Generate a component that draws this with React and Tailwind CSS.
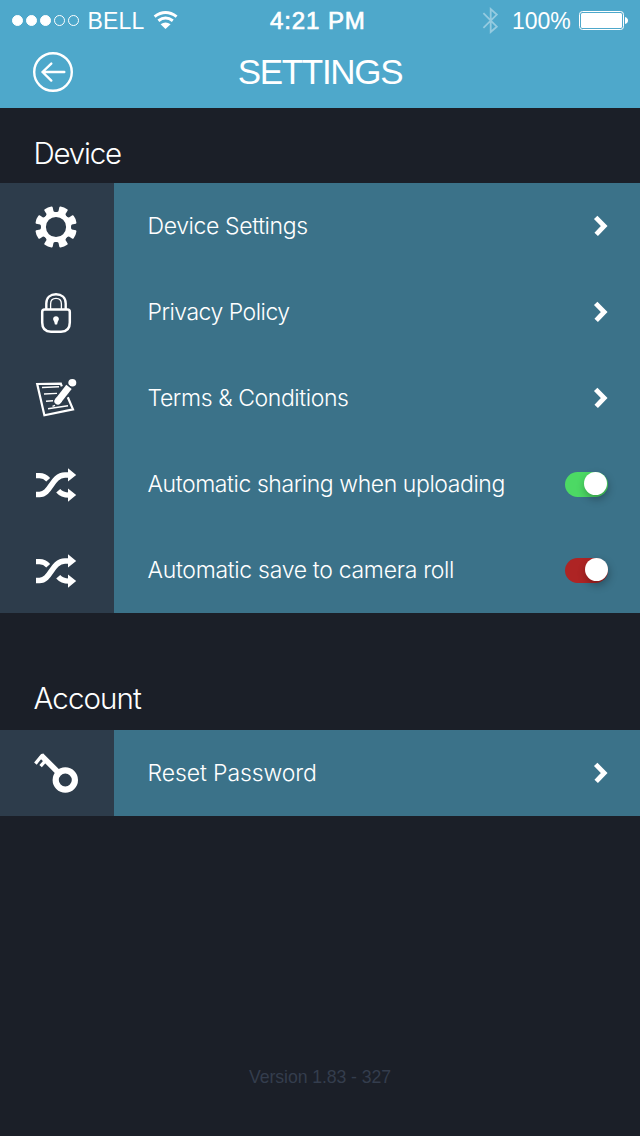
import React from "react";

const GEAR_ANGLES = [22.5, 67.5, 112.5, 157.5, 202.5, 247.5, 292.5, 337.5];

function IconFrame({ children }) {
  return (
    <svg viewBox="0 0 114 86" className="block h-[86px] w-[114px]" fill="none" stroke="white">
      {children}
    </svg>
  );
}

function GearIcon() {
  return (
    <IconFrame>
      <circle cx="56" cy="44" r="12.6" strokeWidth="5" />
      <g fill="white" stroke="none">
        {GEAR_ANGLES.map((a) => (
          <path key={a} transform={`rotate(${a} 56 44)`} d="M50 31.5 L52.2 28.4 L51.5 24.4 Q51.5 23.6 52.4 23.4 Q56 22.4 59.6 23.4 Q60.5 23.6 60.5 24.4 L59.8 28.4 L62 31.5 Z" />
        ))}
      </g>
    </IconFrame>
  );
}

function LockIcon() {
  return (
    <IconFrame>
      <path d="M42.2 43 Q42.2 40.6 44.6 40.6 H67.4 Q69.8 40.6 69.8 43 V53.5 Q69.8 62.7 61 62.7 H51 Q42.2 62.7 42.2 53.5 Z" strokeWidth="2.5" />
      <path d="M46.3 40 V34.5 C46.3 28.5 50.5 25.2 56 25.2 S65.7 28.5 65.7 34.5 V40" strokeWidth="2.4" />
      <path d="M50.6 40 V35 C50.6 31.3 53 29.3 56 29.3 S61.4 31.3 61.4 35 V40" strokeWidth="1.3" />
      <path d="M56 47.2 C54.3 47.2 53.1 48.5 53.1 50.1 C53.1 51.3 54 52.2 54.3 53 L54.9 55.6 H57.1 L57.7 53 C58 52.2 58.9 51.3 58.9 50.1 C58.9 48.5 57.7 47.2 56 47.2 Z" fill="white" stroke="none" />
    </IconFrame>
  );
}

function NotesIcon() {
  return (
    <IconFrame>
      <path d="M61.8 31.4 L60.8 28.7 L37.2 29 L44.4 60.3 L73 54.4 L67.8 42.2" strokeWidth="2.2" />
      <path d="M42 32.5 L59 31.8 M44 39 L57 38.4 M46 46.2 L53 45.7 M48 53.8 L68 50.8 M52.5 51.4 L55 50.4" strokeWidth="1.4" />
      <path d="M58 46 L69 31.8" strokeWidth="6.8" />
      <path d="M57.8 46.2 L58.4 45.5" strokeWidth="6.8" strokeLinecap="round" />
      <ellipse cx="72.3" cy="27.8" rx="4" ry="3.8" fill="white" stroke="none" />
      <path d="M67.6 29.2 L71.4 32.2" stroke="#2d3c4b" strokeWidth="0.8" />
    </IconFrame>
  );
}

function ShuffleIcon() {
  return (
    <IconFrame>
      <path d="M36 53.4 H39.5 C51 53.4 51.5 34.3 65 34.1 H69" strokeWidth="5.5" />
      <path d="M36 34.7 H39.5 Q44.5 34.7 48.2 38.7" strokeWidth="5.3" />
      <path d="M58.2 49.8 Q62 54.2 69 54.2" strokeWidth="5.3" />
      <path d="M68 27.2 L76.2 33.9 L68 40.6 Z M68 47.4 L76.2 54.1 L68 60.8 Z" fill="white" stroke="none" />
    </IconFrame>
  );
}

function KeyIcon() {
  return (
    <IconFrame>
      <circle cx="65.3" cy="50" r="9.6" strokeWidth="6.2" />
      <path d="M41 25.2 L58 42.2" strokeWidth="5.6" />
      <path d="M42.6 24.8 L35.4 33.6 M46.4 29.6 L40.6 36.2" strokeWidth="3.3" />
    </IconFrame>
  );
}

function Chevron() {
  return (
    <svg viewBox="0 0 18 24" className="mr-[31px] h-6 w-[18px]" fill="none" stroke="white" strokeWidth="4.8">
      <path d="M4.7 3.4 L13.2 12 L5.2 20.4" />
    </svg>
  );
}

function Toggle({ on }) {
  return (
    <span className={`mr-8 flex h-[25px] w-[43px] items-center justify-end rounded-full ${on ? "bg-[#4cd964] pr-px" : "bg-[#ae2424]"}`}>
      <span className="mb-px h-[23px] w-[23px] rounded-full bg-white shadow-[1px_4px_9px_rgba(0,0,0,0.3)]" />
    </span>
  );
}

function Row({ icon, label, textClass, children }) {
  return (
    <div className="flex h-[86px]">
      <div className="w-[114px] shrink-0 bg-[#2d3c4b]">{icon}</div>
      <div className="flex flex-1 items-center justify-between bg-[#3b7289] pl-[33.5px]">
        <span className={`whitespace-nowrap text-[23px] leading-none ${textClass}`}>{label}</span>
        {children}
      </div>
    </div>
  );
}

function StatusBar() {
  return (
    <div className="flex h-[42px] items-center font-['Liberation_Sans',sans-serif]">
      <svg viewBox="0 0 84 42" className="h-[42px] w-[84px] shrink-0" fill="white" stroke="white" strokeWidth="1">
        <circle cx="17.5" cy="20.5" r="5" />
        <circle cx="31.5" cy="20.5" r="5" />
        <circle cx="45.5" cy="20.5" r="5" />
        <circle cx="59.5" cy="20.5" r="5" fill="none" />
        <circle cx="73.5" cy="20.5" r="5" fill="none" />
      </svg>
      <span className="w-[66px] shrink-0 whitespace-nowrap pl-[3.5px] text-[23px] leading-none tracking-[0.2px]">BELL</span>
      <svg viewBox="0 0 32 42" className="h-[42px] w-8 shrink-0" fill="none" stroke="white" strokeWidth="3">
        <path d="M4.6 16.6 Q15.5 8.4 26.6 16.6" />
        <path d="M8.4 20.8 Q15.5 15.2 22.8 20.8" />
        <path d="M10.6 24.3 Q15.5 20.6 20.6 24.3 L15.5 29 Z" fill="white" stroke="none" />
      </svg>
      <span className="w-[298px] shrink-0 whitespace-nowrap pl-[88px] text-[24px] leading-none tracking-[0.9px] [-webkit-text-stroke:0.7px_white]">4:21 PM</span>
      <svg viewBox="0 0 32 42" className="h-[42px] w-8 shrink-0" fill="none" stroke="#95cbe0" strokeWidth="1.8">
        <path d="M3.4 13.2 L16.8 26.6 L10.7 32 V9 L16.8 14.6 L3.4 27.8" />
      </svg>
      <span className="w-[67px] shrink-0 whitespace-nowrap text-[23px] leading-none">100%</span>
      <svg viewBox="1 0 51 42" className="h-[42px] w-[51px] shrink-0" fill="none" stroke="white">
        <rect x="1.5" y="11.5" width="44" height="18" rx="3" />
        <rect x="3" y="13" width="41" height="15" rx="1.5" fill="white" stroke="none" />
        <path d="M47 17 Q50 18 50 20.5 T47 24 Z" fill="white" stroke="none" />
      </svg>
    </div>
  );
}

export default function App() {
  return (
    <main className="flex h-[1136px] w-[640px] flex-col overflow-hidden bg-[#1b1f28] font-['Inter','Liberation_Sans',sans-serif] font-light text-white">
      <header className="h-[108px] bg-[#4ea8cb]">
        <StatusBar />
        <div className="grid h-[60px] grid-cols-[106px_1fr_106px] items-center">
          <svg viewBox="0 0 42 42" className="ml-8 h-[42px] w-[42px]" fill="none" stroke="white" strokeWidth="2.4">
            <circle cx="21" cy="21" r="18.8" />
            <path d="M32.3 21 H10.5 M19.3 12.6 L10.5 21 L19.3 29.6" strokeLinecap="round" strokeLinejoin="round" />
          </svg>
          <h1 className="pb-0.5 text-center font-['Liberation_Sans',sans-serif] text-[35px] leading-none tracking-[-1.3px]">SETTINGS</h1>
        </div>
      </header>
      <h2 className="flex h-[75px] items-center pt-4 pl-[33.5px] text-[29.5px] leading-none tracking-[-1.2px]">Device</h2>
      <section>
        <Row icon={<GearIcon />} label="Device Settings" textClass="tracking-[-0.38px]"><Chevron /></Row>
        <Row icon={<LockIcon />} label="Privacy Policy" textClass="tracking-[-0.5px]"><Chevron /></Row>
        <Row icon={<NotesIcon />} label="Terms &amp; Conditions" textClass="tracking-[-0.4px]"><Chevron /></Row>
        <Row icon={<ShuffleIcon />} label="Automatic sharing when uploading" textClass="tracking-[-0.42px]"><Toggle on /></Row>
        <Row icon={<ShuffleIcon />} label="Automatic save to camera roll" textClass="tracking-[-0.3px]"><Toggle /></Row>
      </section>
      <h2 className="flex h-[117px] items-center pt-[54px] pl-[33.5px] text-[29.5px] leading-none tracking-[-0.9px]">Account</h2>
      <section>
        <Row icon={<KeyIcon />} label="Reset Password" textClass="tracking-[-0.1px]"><Chevron /></Row>
      </section>
      <footer className="mt-auto pb-[49px] text-center font-['Liberation_Sans',sans-serif] text-[17.7px] leading-none tracking-[-0.1px] text-[#343d4d]">Version 1.83 - 327</footer>
    </main>
  );
}
